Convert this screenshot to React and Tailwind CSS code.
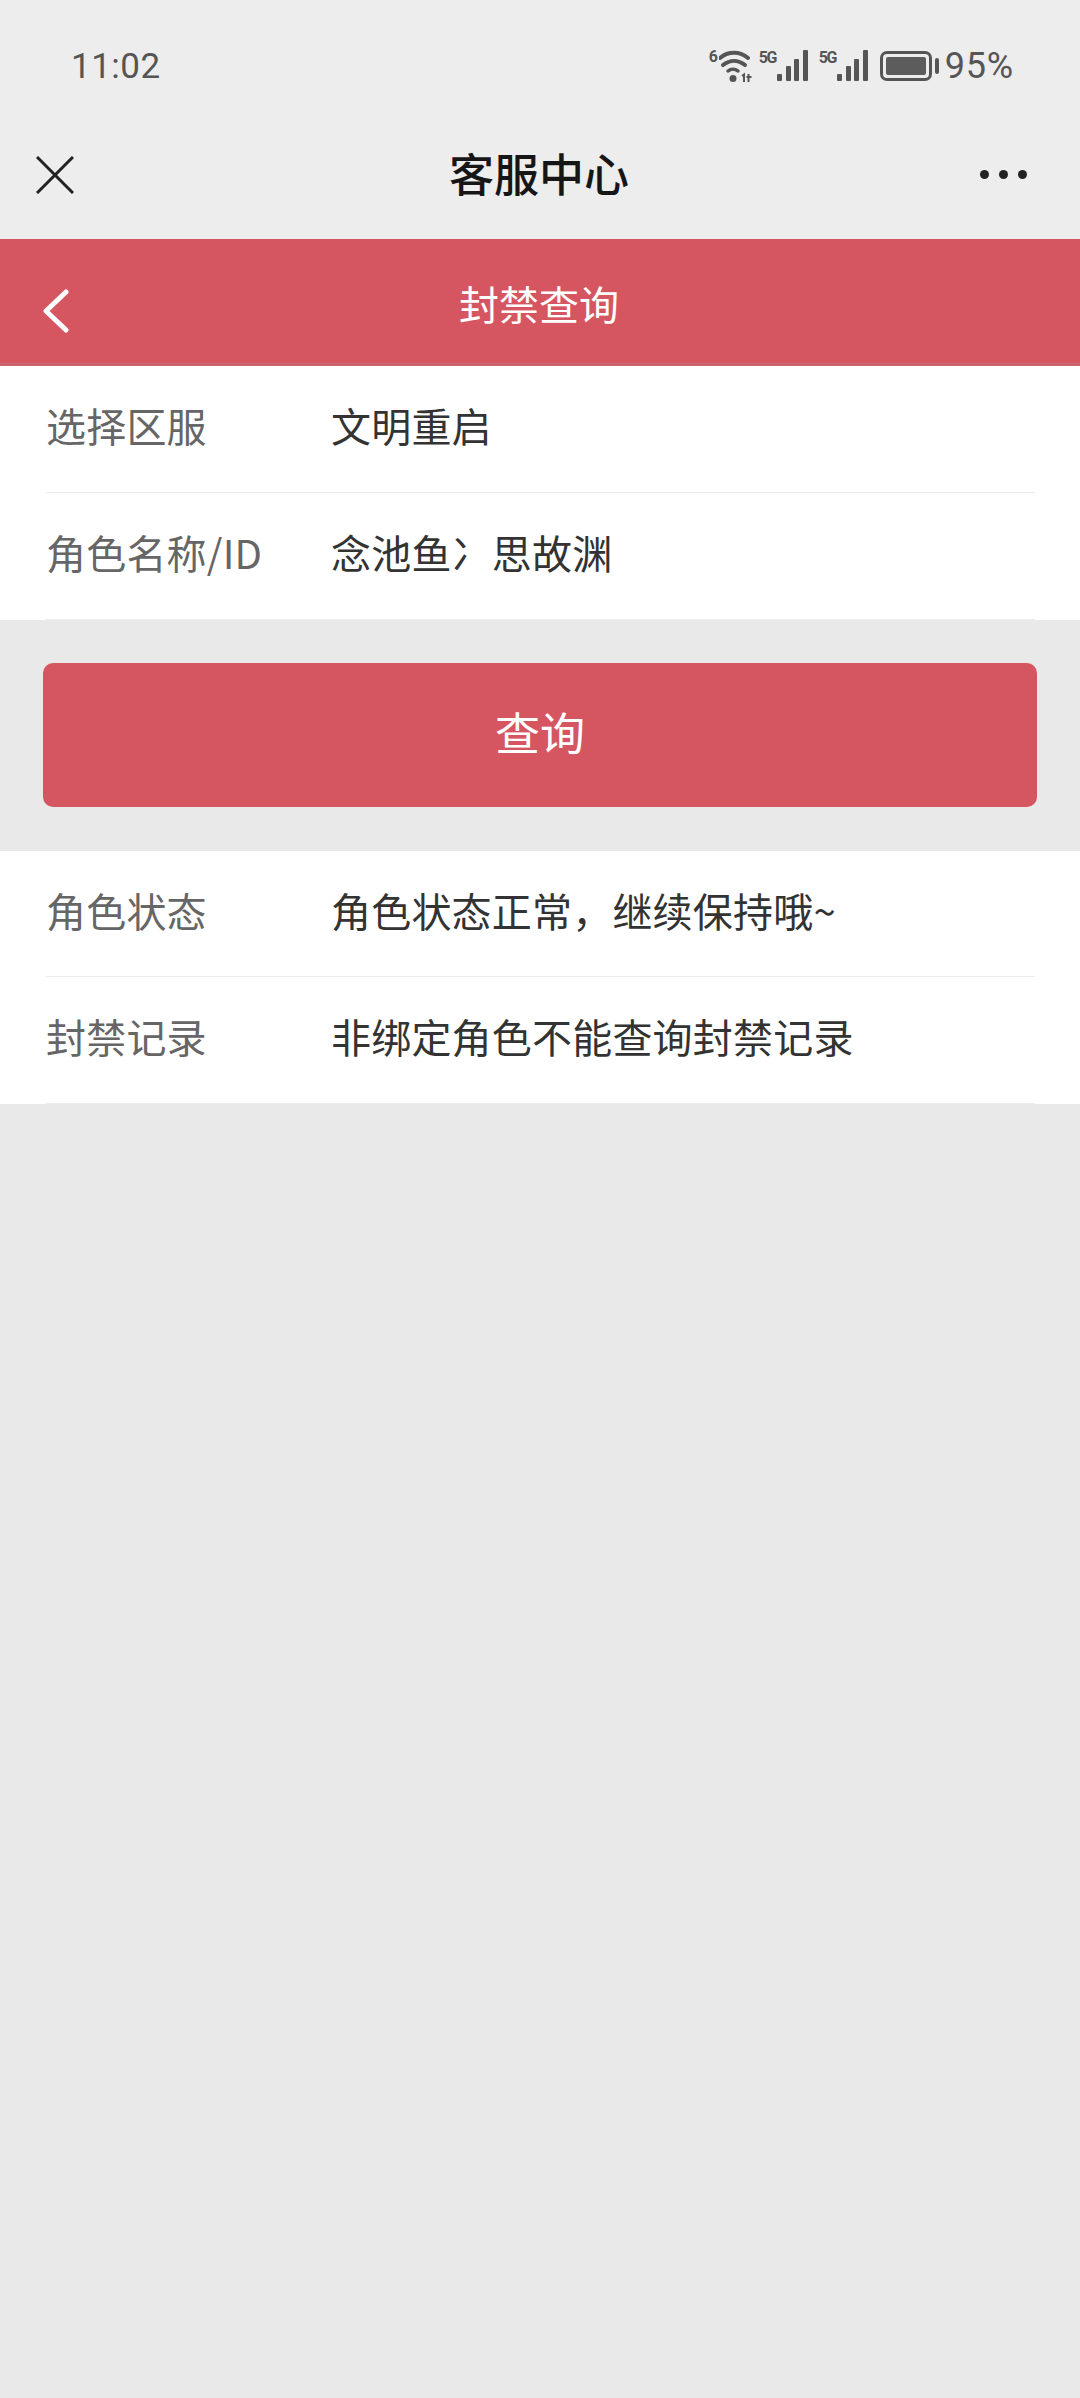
import React from "react";

const CJK = "font-['Noto_Sans_CJK_SC','Noto_Sans',sans-serif]";

function Signal() {
  return (
    <div className="flex items-start h-[32px]">
      <span className="w-[18px] text-[16px] leading-[16px] font-bold tracking-[-1.5px] text-[#555]">5G</span>
      <svg width="31" height="32" viewBox="0 0 31 32" className="block">
        <rect x="0" y="24" width="5" height="7" rx="1" fill="#555" />
        <rect x="9" y="16" width="5" height="15" rx="1" fill="#555" />
        <rect x="17" y="9" width="5" height="22" rx="1" fill="#555" />
        <rect x="26" y="0" width="5" height="31" rx="1" fill="#555" />
      </svg>
    </div>
  );
}

function Wifi() {
  return (
    <div className="flex items-start h-[34px]">
      <span className="w-[10px] text-[16px] leading-[16px] font-bold text-[#555]">6</span>
      <svg width="34" height="34" viewBox="10 0 34 34" className="block">
        <path d="M11 9C19 2 31 2 39 9" fill="none" stroke="#555" strokeWidth="4" strokeLinecap="round" />
        <path d="M14 16C21 10.500 29 10.500 36 16" fill="none" stroke="#555" strokeWidth="4" strokeLinecap="round" />
        <path d="M19 22C22 19.500 26 19.500 29 22" fill="none" stroke="#555" strokeWidth="3.500" strokeLinecap="round" />
        <circle cx="24" cy="29.500" r="3.500" fill="#555" />
        <path d="M33 27l2-1.500v7.500M39.500 25v8M37.500 28h5" fill="none" stroke="#555" strokeWidth="2" />
      </svg>
    </div>
  );
}

function Battery() {
  return (
    <div className="flex items-center gap-[3px]">
      <div className="w-[52px] h-[30px] rounded-[7px] border-[3px] border-[#555] p-[3px]">
        <div className="w-full h-full rounded-[2px] bg-[#5c5c5c]" />
      </div>
      <div className="w-[4px] h-[16px] rounded-[2px] bg-[#555]" />
    </div>
  );
}

function Row({ label, value, short }) {
  return (
    <div className={`ml-[46px] mr-[45px] ${short ? "h-[126px]" : "h-[127px]"} pb-[8px] border-b-[1.5px] border-[#ececec] flex items-center tracking-[0.2px]`}>
      <div className="w-[285px] shrink-0 text-[40px] leading-none text-[#666]">{label}</div>
      <div className="text-[40px] leading-none text-[#333] whitespace-nowrap">{value}</div>
    </div>
  );
}

export default function App() {
  return (
    <div className={`min-h-[2398px] bg-[#e9e9e9] ${CJK}`}>
      <div className="bg-[#ededed] h-[239px]">
        <div className="h-[120px] pt-[12px] pl-[71px] pr-[66px] flex items-center justify-between font-['Roboto',sans-serif] text-[#555]">
          <span className="text-[35px] tracking-[0.5px] leading-none">11:02</span>
          <div className="flex items-center">
            <div className="mr-[6px]"><Wifi /></div>
            <Signal />
            <div className="ml-[11px]"><Signal /></div>
            <div className="ml-[12px]"><Battery /></div>
            <span className="ml-[6px] text-[36px] leading-none tracking-[0.8px]">95%</span>
          </div>
        </div>
        <div className="relative h-[119px] flex items-center justify-center">
          <svg width="38" height="38" viewBox="0 0 38 38" className="absolute left-[36px] top-[36px]">
            <path d="M1 1L37 37M37 1L1 37" stroke="#222" strokeWidth="3" fill="none" />
          </svg>
          <span className="text-[45px] leading-none font-medium text-[#161616] pb-[14px] -ml-[2px]">客服中心</span>
          <div className="absolute left-[980px] top-[50px] flex gap-[10px]">
            <span className="w-[9px] h-[9px] rounded-full bg-[#222]" />
            <span className="w-[9px] h-[9px] rounded-full bg-[#222]" />
            <span className="w-[9px] h-[9px] rounded-full bg-[#222]" />
          </div>
        </div>
      </div>

      <div className="relative h-[127px] bg-[#d55660] border-b-[3px] border-[#c9636c] flex items-center justify-center">
        <svg width="28" height="44" viewBox="0 0 28 44" className="absolute left-[42px] top-[50px]">
          <path d="M24 3L4 22L24 41" stroke="#fff" strokeWidth="5" strokeLinecap="round" strokeLinejoin="round" fill="none" />
        </svg>
        <span className="text-[40px] leading-none text-white pt-[4px] -ml-[2px]">封禁查询</span>
      </div>

      <div className="bg-white">
        <Row label="选择区服" value="文明重启" />
        <Row label="角色名称/ID" value="念池鱼冫思故渊" />
      </div>

      <div className="pl-[43px] pt-[43px] pb-[44px]">
        <button className="w-[994px] h-[144px] pb-[8px] rounded-[10px] bg-[#d55660] text-white text-[45px] leading-none">查询</button>
      </div>

      <div className="bg-white">
        <Row label="角色状态" value="角色状态正常，继续保持哦~" short />
        <Row label="封禁记录" value="非绑定角色不能查询封禁记录" />
      </div>
    </div>
  );
}
